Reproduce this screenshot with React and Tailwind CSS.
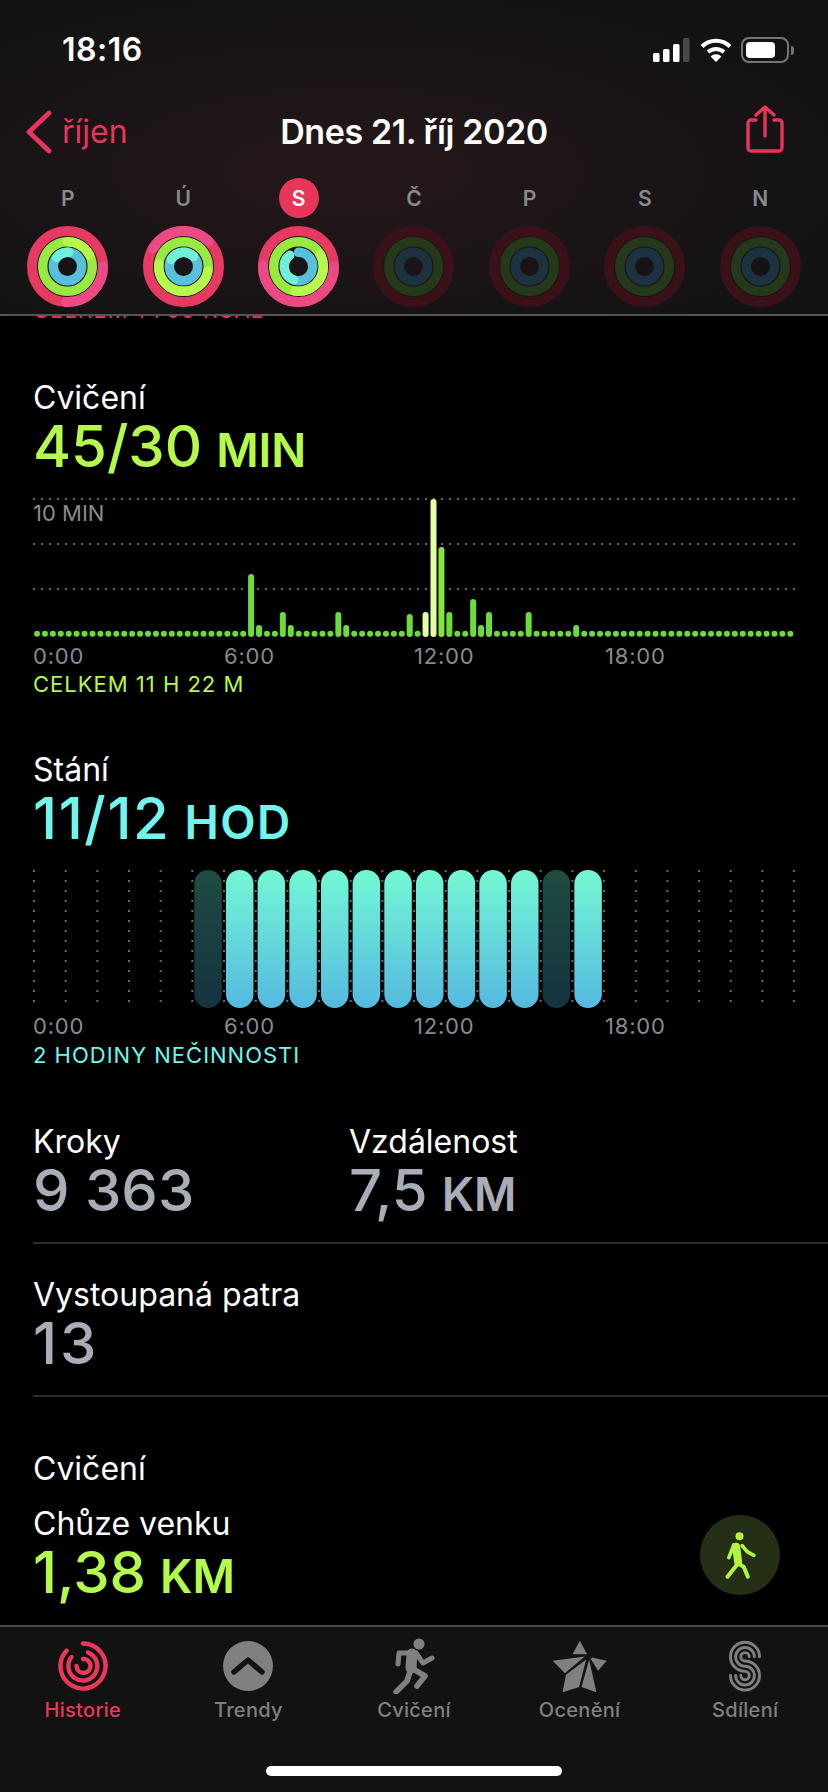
import React from 'react';

const days = [
  { letter: 'P', rings: { red: [90, 182, '#ec4a86'], green: [0, 62, '#b6f94d'], blue: [-50, 5, '#70f0d8'] } },
  { letter: 'Ú', rings: { red: [-60, 45, '#ec4a86'], green: [100, 275, '#b6f94d'], blue: [-60, 45, '#70f0d8'] } },
  { letter: 'S', active: true, rings: { red: [90, 272, '#ec4a86'], green: [60, 188, '#b6f94d'], blue: [200, 322, '#70f0d8'] } },
  { letter: 'Č' },
  { letter: 'P' },
  { letter: 'S' },
  { letter: 'N' },
];

const exerciseBars = {
  27: 574, 28: 625, 31: 612, 32: 625, 38: 612, 39: 625, 47: 614, 49: 612, 50: 499,
  51: 547, 52: 612, 55: 599, 56: 625, 57: 612, 62: 612, 68: 625,
};

const tabs = ['Historie', 'Trendy', 'Cvičení', 'Ocenění', 'Sdílení'];

function arc(r, start, end) {
  const a = ((start - 90) * Math.PI) / 180;
  const b = ((end - 90) * Math.PI) / 180;
  const large = end - start > 180 ? 1 : 0;
  const c = 40.5;
  return `M ${c + r * Math.cos(a)} ${c + r * Math.sin(a)} A ${r} ${r} 0 ${large} 1 ${c + r * Math.cos(b)} ${c + r * Math.sin(b)}`;
}

function Ring({ rings, third }) {
  if (!rings) {
    return (
      <svg width="81" height="81" viewBox="0 0 81 81">
        <circle cx="40.5" cy="40.5" r="35.5" fill="none" stroke="#3a1119" strokeWidth="10" />
        <circle cx="40.5" cy="40.5" r="24.8" fill="none" stroke="#24381a" strokeWidth="9.5" />
        <circle cx="40.5" cy="40.5" r="14.2" fill="none" stroke="#1c3240" strokeWidth="9.5" />
      </svg>
    );
  }
  return (
    <svg width="81" height="81" viewBox="0 0 81 81">
      <circle cx="40.5" cy="40.5" r="35.5" fill="none" stroke="#e53a62" strokeWidth="10" />
      <path d={arc(35.5, rings.red[0], rings.red[1])} fill="none" stroke={rings.red[2]} strokeWidth="10" strokeLinecap="round" />
      <circle cx="40.5" cy="40.5" r="24.8" fill="none" stroke="#98ea42" strokeWidth="9.5" />
      <path d={arc(24.8, rings.green[0], rings.green[1])} fill="none" stroke={rings.green[2]} strokeWidth="9.5" strokeLinecap="round" />
      {third ? (
        <path d={arc(14.2, 0, 200)} fill="none" stroke="#58c0dc" strokeWidth="9.5" strokeLinecap="round" />
      ) : (
        <circle cx="40.5" cy="40.5" r="14.2" fill="none" stroke="#58c0dc" strokeWidth="9.5" />
      )}
      <path d={arc(14.2, rings.blue[0], rings.blue[1])} fill="none" stroke={rings.blue[2]} strokeWidth="9.5" strokeLinecap="round" />
    </svg>
  );
}

function ExerciseChart() {
  const ys = [4, 49, 94];
  return (
    <div className="relative ml-[33px] h-[145px] w-[770px]">
      <svg width="770" height="145" viewBox="0 0 770 145">
        {ys.map((y) => (
          <line key={y} x1="0" x2="762" y1={y} y2={y} stroke="#6a6a6a" strokeWidth="2" strokeDasharray="2 6" />
        ))}
        {Array.from({ length: 96 }).map((_, i) => {
          const x = 1 + i * 7.93;
          const top = exerciseBars[i];
          if (!top) return <circle key={i} cx={x + 3} cy="138.7" r="3" fill="#6cdb3c" />;
          const light = i === 49 || i === 50;
          const fill = light ? '#e2ffa6' : i === 51 ? '#86e23c' : '#6cdb3c';
          return <rect key={i} x={x} y={top - 495} width="6" height={637 - top} rx="3" fill={fill} />;
        })}
      </svg>
      <span className="absolute left-0 top-[6px] text-[22px] leading-6 text-[#8a8a8e]">10 MIN</span>
    </div>
  );
}

function StandChart() {
  const dim = [0, 11];
  return (
    <svg className="ml-[33px] block" width="770" height="144" viewBox="0 0 770 144">
      <defs>
        <linearGradient id="standOn" x1="0" x2="0" y1="0" y2="1">
          <stop offset="0" stopColor="#74f8d5" />
          <stop offset="1" stopColor="#55b9e0" />
        </linearGradient>
        <linearGradient id="standOff" x1="0" x2="0" y1="0" y2="1">
          <stop offset="0" stopColor="#1f4c42" />
          <stop offset="1" stopColor="#14333f" />
        </linearGradient>
      </defs>
      {Array.from({ length: 25 }).map((_, c) =>
        Array.from({ length: 14 }).map((_, r) => (
          <rect key={`${c}-${r}`} x={c * 31.67} y={3 + r * 10} width="2" height="2" fill="#6a6a6a" />
        ))
      )}
      {Array.from({ length: 13 }).map((_, i) => (
        <rect
          key={i}
          x={161.3 + i * 31.67}
          y="3"
          width="27.5"
          height="138"
          rx="13.7"
          fill={dim.includes(i) ? 'url(#standOff)' : 'url(#standOn)'}
        />
      ))}
    </svg>
  );
}

function TimeAxis() {
  return (
    <div className="ml-[33px] flex text-[22px] leading-6 tracking-[0.8px] text-[#8a8a8e]">
      <span className="w-[191px]">0:00</span>
      <span className="w-[190px]">6:00</span>
      <span className="w-[191px]">12:00</span>
      <span>18:00</span>
    </div>
  );
}

function Metric({ label, value, valueClass, unit, unitClass, color, className }) {
  return (
    <div className={className}>
      <div className="h-10 text-[32px] leading-10 text-white">{label}</div>
      <div className={`mt-[-2px] h-[60px] text-[58px] font-medium leading-[60px] ${color}`}>
        <span className={valueClass}>{value}</span>
        {unit && <span className={`ml-[14px] text-[46px] font-semibold ${unitClass || ''}`}>{unit}</span>}
      </div>
    </div>
  );
}

function TabIcon({ name }) {
  if (name === 'Historie') {
    return (
      <svg width="52" height="52" viewBox="0 0 52 52" fill="none" stroke="#ee3658" strokeWidth="4.4" strokeLinecap="round">
        <path d="M 26 3.5 A 22.5 22.5 0 1 1 9.5 10.7" />
        <path d="M 31 12.5 A 14.5 14.5 0 1 1 14.5 17" />
        <path d="M 26 19 A 7 7 0 1 1 19.5 26" />
      </svg>
    );
  }
  if (name === 'Trendy') {
    return (
      <svg width="52" height="52" viewBox="0 0 52 52">
        <circle cx="26" cy="26" r="25" fill="#808080" />
        <path d="M 12 32 L 26 20 L 40 32" fill="none" stroke="#121212" strokeWidth="5.5" strokeLinecap="round" strokeLinejoin="round" />
      </svg>
    );
  }
  if (name === 'Cvičení') {
    return (
      <svg width="44" height="56" viewBox="0 0 44 56" fill="none" stroke="#808080" strokeLinecap="round" strokeLinejoin="round">
        <circle cx="27" cy="6" r="5.6" fill="#808080" stroke="none" />
        <path d="M 20 16 L 19 30" strokeWidth="11" />
        <path d="M 18 15 L 7 15 L 6 26" strokeWidth="5" />
        <path d="M 24 15 L 31 25 L 40 20" strokeWidth="5" />
        <path d="M 19 31 L 15 43 L 4 54" strokeWidth="5.6" />
        <path d="M 21 31 L 33 38 L 25 48" strokeWidth="5.6" />
      </svg>
    );
  }
  if (name === 'Ocenění') {
    return (
      <svg width="58" height="57" viewBox="120 20 175 170" fill="#808080">
        <polygon points="207,27 229,68 185,68" />
        <polygon points="125,88 222,75 162,125" />
        <polygon points="155,183 165,130 226,84 205,167" />
        <polygon points="257,183 235,84 212,167" />
        <polygon points="288,88 244,78 240,82 262,118" />
      </svg>
    );
  }
  return (
    <svg width="34" height="53" viewBox="650 20 104 164" fill="none" stroke="#808080" strokeWidth="9" strokeLinecap="round">
      <path d="M 747 72 A 45 45 0 1 0 702 117 A 13 13 0 1 1 689 130" />
      <path d="M 731 72 A 29 29 0 1 0 702 101 A 29 29 0 1 1 673 130" />
      <path d="M 715 72 A 13 13 0 1 0 702 85 A 45 45 0 1 1 657 130" />
    </svg>
  );
}

export default function App() {
  return (
    <div className="relative flex h-[1792px] w-[828px] flex-col overflow-hidden bg-black font-['Inter',sans-serif] text-white">
      <header className="h-[316px] shrink-0 border-b-2 border-[#555558] bg-[radial-gradient(ellipse_at_42%_55%,#25171a_0%,#1a1416_45%,#121212_85%)]">
        <div className="flex h-9 translate-y-[32px] items-center justify-between pl-[62px] pr-[34px]">
          <span className="text-[32px] font-semibold leading-9 tracking-[0.5px]">18:16</span>
          <div className="flex items-center gap-[9px]">
            <svg width="38" height="24" viewBox="0 0 38 24">
              <rect x="0" y="15" width="6.5" height="9" rx="1.5" fill="#fff" />
              <rect x="10" y="11" width="6.5" height="13" rx="1.5" fill="#fff" />
              <rect x="20" y="6" width="6.5" height="18" rx="1.5" fill="#fff" />
              <rect x="30" y="0" width="6.5" height="24" rx="1.5" fill="#48484a" />
            </svg>
            <svg width="32" height="24" viewBox="0 0 32 24" fill="none" stroke="#fff" strokeWidth="4">
              <path d="M 2 8.5 A 20 20 0 0 1 30 8.5" />
              <path d="M 8 14 A 12 12 0 0 1 24 14" />
              <path d="M 16 24 L 10.5 18.5 A 8 8 0 0 1 21.5 18.5 Z" fill="#fff" stroke="none" />
            </svg>
            <div className="flex items-center gap-[2px]">
              <div className="flex h-[26px] w-[48px] items-center rounded-[8px] border-2 border-[#757575] p-[3px]">
                <div className="h-full w-[29px] rounded-[4px] bg-white" />
              </div>
              <div className="h-[9px] w-[3px] rounded-r-full bg-[#757575]" />
            </div>
          </div>
        </div>

        <nav className="mt-[72px] grid h-12 grid-cols-[1fr_auto_1fr] items-center">
          <div className="flex items-center pl-[26px] text-[#e8355a]">
            <svg width="26" height="44" viewBox="0 0 26 44" fill="none" stroke="#e8355a" strokeWidth="4.8" strokeLinecap="round" strokeLinejoin="round">
              <path d="M 23 3 L 3 22 L 23 41" />
            </svg>
            <span className="ml-[10px] text-[32px] leading-10">říjen</span>
          </div>
          <h1 className="text-[34px] font-semibold leading-10 tracking-[-0.4px]">Dnes 21. říj 2020</h1>
          <div className="flex justify-end pr-[44px]">
            <svg className="-translate-y-[3px]" width="38" height="48" viewBox="0 0 38 48" fill="none" stroke="#e8355a" strokeWidth="3.4" strokeLinecap="round" strokeLinejoin="round">
              <path d="M 10 15 L 5 15 A 3 3 0 0 0 2 18 L 2 43 A 3 3 0 0 0 5 46 L 33 46 A 3 3 0 0 0 36 43 L 36 18 A 3 3 0 0 0 33 15 L 28 15" />
              <path d="M 19 31 L 19 2 M 10 10 L 19 2 L 28 10" />
            </svg>
          </div>
        </nav>

        <div className="mx-[10px] mt-[22px] grid w-[808px] grid-cols-7">
          {days.map((d, i) => (
            <div key={i} className="flex flex-col items-center">
              <div
                className={`flex size-10 items-center justify-center rounded-full text-[21px] font-semibold leading-none ${
                  d.active ? 'bg-[#e8355a] text-white' : 'text-[#8a8a8e]'
                }`}
              >
                {d.letter}
              </div>
              <div className="mt-2 h-[81px]">
                <Ring rings={d.rings} third={d.active} />
              </div>
            </div>
          ))}
        </div>
      </header>

      <main className="min-h-0 flex-1 overflow-hidden">
        <div className="-mt-[18px] h-6 pl-[33px] text-[22px] leading-6 tracking-[1px] text-[#e8355a]">CELKEM 1 760 KCAL</div>

        <Metric className="mt-[56px] pl-[33px]" label="Cvičení" value="45/30" unit="MIN" color="text-[#b6f94d]" />
        <div className="mt-[19px]">
          <ExerciseChart />
        </div>
        <div className="mt-1">
          <TimeAxis />
        </div>
        <div className="mt-1 pl-[33px] text-[22px] leading-6 tracking-[1px] text-[#b6f94d]">CELKEM 11 H 22 M</div>

        <Metric
          className="mt-[54px] pl-[33px]"
          label="Stání"
          value="11/12"
          valueClass="tracking-[1.6px]"
          unit="HOD"
          unitClass="tracking-[1.5px]"
          color="text-[#6ff6ee]"
        />
        <div className="mt-[19px]">
          <StandChart />
        </div>
        <div className="mt-[3px]">
          <TimeAxis />
        </div>
        <div className="mt-[5px] pl-[33px] text-[22px] leading-6 tracking-[1px] text-[#6ff6ee]">2 HODINY NEČINNOSTI</div>

        <div className="mt-[55px] ml-[33px] flex h-[122px] border-b-2 border-[#2c2c2e]">
          <Metric className="w-[316px]" label="Kroky" value="9 363" color="text-[#a8adb8]" />
          <Metric label="Vzdálenost" value="7,5" unit="KM" color="text-[#a8adb8]" />
        </div>
        <div className="ml-[33px] h-[153px] border-b-2 border-[#2c2c2e] pt-[31px]">
          <Metric label="Vystoupaná patra" value="13" valueClass="tracking-[3px]" color="text-[#a8adb8]" />
        </div>

        <div className="mt-[52px] h-10 pl-[33px] text-[32px] leading-10">Cvičení</div>
        <Metric className="mt-[15px] pl-[33px]" label="Chůze venku" value="1,38" unit="KM" color="text-[#b6f94d]" />
      </main>

      <div className="absolute left-[700px] top-[1515px] flex size-20 items-center justify-center rounded-full bg-[#252f15]">
        <svg width="37" height="50" viewBox="130 85 110 150" fill="none" stroke="#b2f53f" strokeLinecap="round" strokeLinejoin="round">
          <circle cx="182" cy="104" r="12" fill="#b2f53f" stroke="none" />
          <path d="M 172 135 L 178 182" strokeWidth="24" />
          <path d="M 165 130 L 150 168" strokeWidth="11" />
          <path d="M 190 132 L 205 150 L 225 161" strokeWidth="11" />
          <path d="M 178 185 L 146 225" strokeWidth="12" />
          <path d="M 178 185 L 195 196 L 207 225" strokeWidth="12" />
        </svg>
      </div>

      <footer className="relative h-[167px] shrink-0 border-t-2 border-[#48484a] bg-[#121212]">
        <div className="grid grid-cols-5">
          {tabs.map((t, i) => (
            <div key={t} className="flex flex-col items-center">
              <div className="mt-[10px] flex h-[58px] items-center justify-center">
                <TabIcon name={t} />
              </div>
              <span className={`mt-[3px] text-[20px] font-medium leading-6 tracking-[0.3px] ${i === 0 ? 'text-[#ee3658]' : 'text-[#808080]'}`}>{t}</span>
            </div>
          ))}
        </div>
        <div className="absolute bottom-[16px] left-[266px] h-[10px] w-[296px] rounded-full bg-white" />
      </footer>
    </div>
  );
}
